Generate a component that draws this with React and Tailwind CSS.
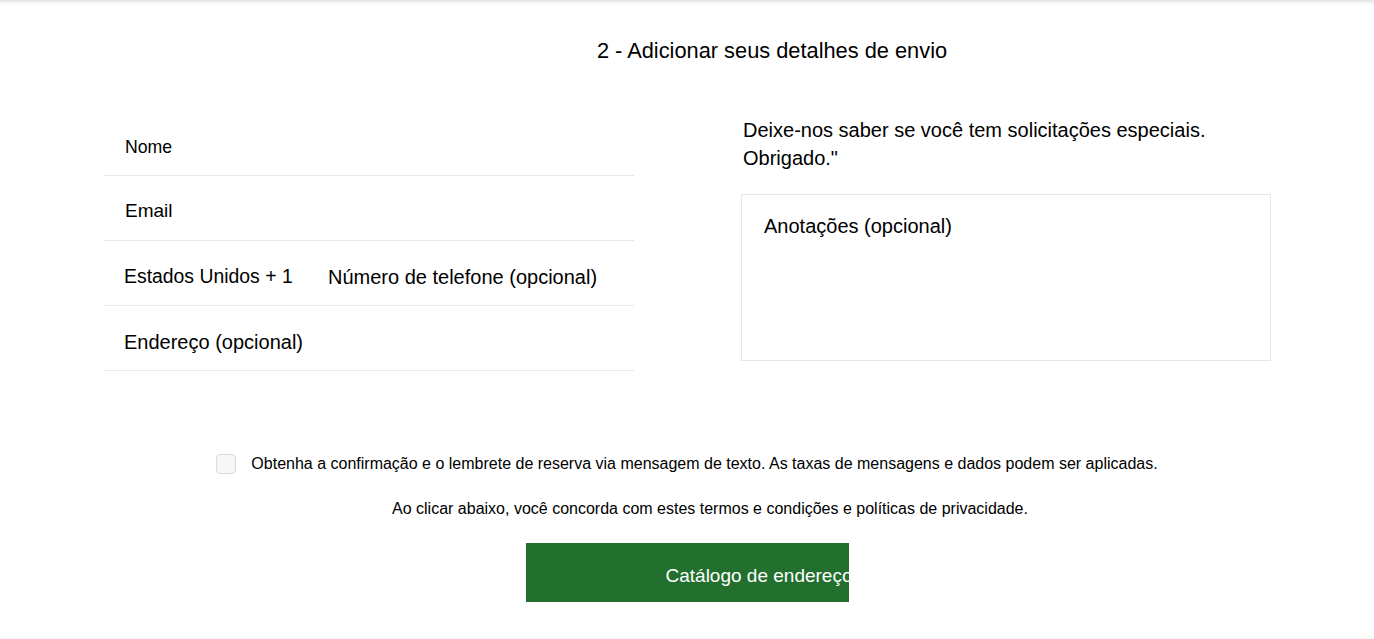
import React from "react";

export default function App() {
  const font = { fontFamily: '"Liberation Sans", Arial, sans-serif' };
  return (
    <div
      className="relative w-full h-[639px] bg-white overflow-hidden text-black"
      style={font}
    >
      <div className="absolute top-0 left-0 right-0 h-[6px] bg-gradient-to-b from-[#e2e2e2] via-[#f6f6f6] to-white" />
      <div className="absolute bottom-0 left-0 right-0 h-[6px] bg-gradient-to-b from-white to-[#f7f7f7]" />

      <div className="pt-[38px] pl-[170px] text-center text-[21.8px] leading-[26px]">
        2 - Adicionar seus detalhes de envio
      </div>

      <div className="flex justify-between px-[103px] mt-[46px]">
        <div className="w-[530px] ml-[1px]">
          <div className="h-[66px] border-b border-[#e8e8e8] flex items-center pt-[9px] pl-[21px] text-[17.7px]">
            Nome
          </div>
          <div className="h-[65px] border-b border-[#e8e8e8] flex items-center pt-[7px] pl-[21px] text-[19px]">
            Email
          </div>
          <div className="h-[65px] border-b border-[#e8e8e8] flex items-center pt-[8px] pl-[20px]">
            <span className="w-[204px] text-[19.4px]">Estados Unidos + 1</span>
            <span className="text-[20px]">Número de telefone (opcional)</span>
          </div>
          <div className="h-[65px] border-b border-[#e8e8e8] flex items-center pt-[8px] pl-[20px] text-[20px]">
            Endereço (opcional)
          </div>
        </div>

        <div className="w-[530px] pt-[6px]">
          <p className="pl-[2px] text-[20px] leading-[28px]">
            Deixe-nos saber se você tem solicitações especiais.
            <br />
            Obrigado."
          </p>
          <div className="mt-[22px] h-[167px] border border-[#e6e6e6] pt-[19px] pl-[22px] text-[20px] leading-[24px]">
            Anotações (opcional)
          </div>
        </div>
      </div>

      <div className="mt-[83px] flex justify-center items-center gap-[15px] text-[16px] leading-[20px]">
        <div className="w-[20px] h-[20px] rounded-[4px] border border-[#d9d9d9] bg-[#f7f7f7]" />
        <span>
          Obtenha a confirmação e o lembrete de reserva via mensagem de texto. As taxas de mensagens e dados podem ser aplicadas.
        </span>
      </div>

      <div className="mt-[26px] pl-[46px] text-center text-[16px] leading-[18px]">
        Ao clicar abaixo, você concorda com estes termos e condições e políticas de privacidade.
      </div>

      <div className="mt-[25px] flex justify-center">
        <button className="w-[323px] h-[59px] bg-[#236F2E] text-white text-[19px] overflow-hidden whitespace-nowrap text-left pl-[140px] pt-[8px]">
          Catálogo de endereços
        </button>
      </div>
    </div>
  );
}
